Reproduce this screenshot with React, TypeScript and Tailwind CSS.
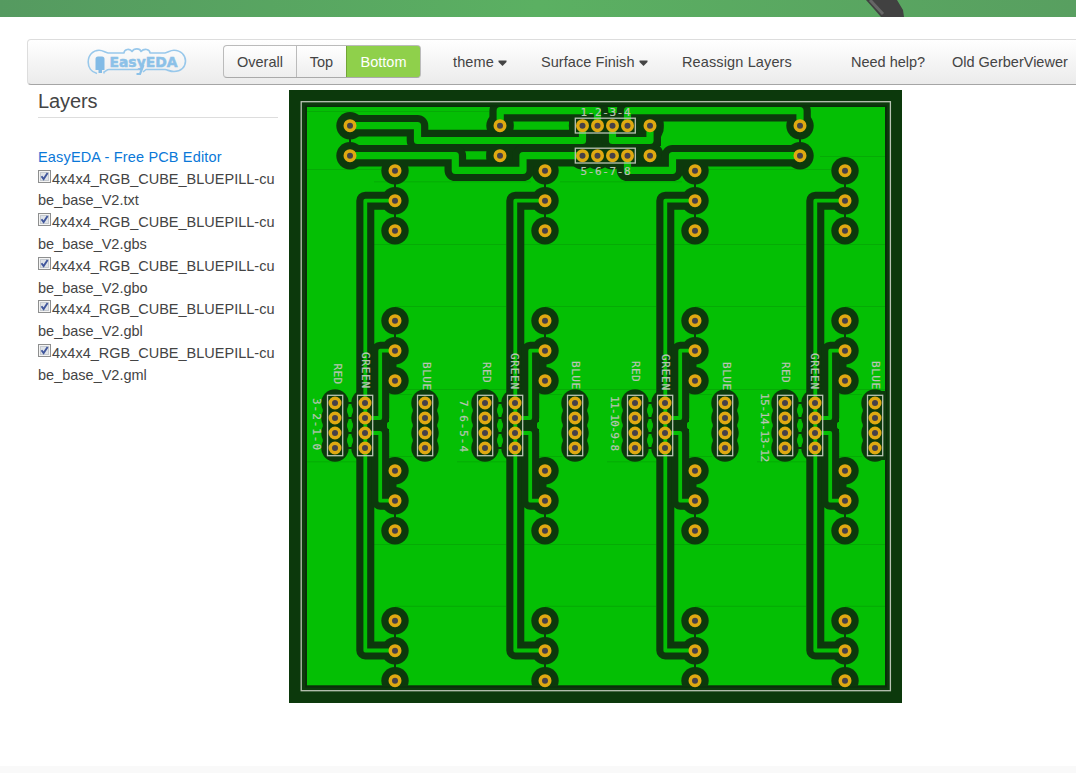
import React from 'react';

const DARK = '#0c390c';
const COPPER = '#04bf04';
const SILK = '#b9c4b4';

const columns = [0, 150, 300, 450];
const columnPads = [170.7, 200.7, 230.7, 320.7, 350.7, 380.7, 470.7, 500.7, 530.7, 620.7, 650.7, 680.7];
const headerX = [335, 365, 425];
const headerY = [403, 418, 433, 448];
const pinX = [582.5, 597.5, 612.5, 627.5];

const wideTraces = [
  'M350 125.7H417.5V140.5H582.5V125.7',
  'M350 155.7H455.3V170.3H523V155.7H582.5',
  'M500.2 125.7V110.7H597.5V125.7',
  'M627.5 125.7V110.7H800V125.7',
  'M612.5 125.7V140.5H650V125.7',
  'M627.5 155.7V170.3H672.5V155.7H800',
];

const thinTraces = [
  'M395 200.7H365.3V650.5H395',
  'M365 418H380.2V350.7H395',
  'M365 433H380.2V500.7H395',
];

const edgePads: [number, number][] = [350, 500, 650, 800].flatMap((x) => [
  [x, 125.7] as [number, number],
  [x, 155.7] as [number, number],
]);

const pads: [number, number][] = [
  ...edgePads,
  ...pinX.flatMap((x) => [[x, 125.7], [x, 155.7]] as [number, number][]),
  ...columns.flatMap((dx) => [
    ...columnPads.map((y) => [395 + dx, y] as [number, number]),
    ...headerX.flatMap((x) => headerY.map((y) => [x + dx, y] as [number, number])),
  ]),
];

const seams: [number, number, number][] = [
  [307, 489, 111.5], [307, 381, 169.5], [820, 885, 156.5], [705, 831, 169.5],
  [374, 531, 181.8], [560, 682, 181.8],
  ...columns.flatMap((dx) => [
    [374 + dx, Math.min(506 + dx, 885), 244.5],
    [395 + dx, Math.min(506 + dx, 885), 306.5],
    [389 + dx, Math.min(506 + dx, 885), 389.5],
    [389 + dx, 412 + dx, 394.5],
    [389 + dx, 412 + dx, 456.5],
    [307 + dx, 356 + dx, 461.8],
    [374 + dx, Math.min(506 + dx, 885), 544.5],
    [395 + dx, Math.min(506 + dx, 885), 606.3],
  ] as [number, number, number][]),
];

const verticalLabels: [string, number, number, number][] = [
  ['RED', 333.5, 363.5, 20.5], ['GREEN', 361.8, 352, 36], ['BLUE', 423, 362, 28], ['3-2-1-0', 313.3, 398, 52],
  ['RED', 483, 362, 20.5], ['GREEN', 511.3, 353, 36], ['BLUE', 571.8, 361, 28], ['7-6-5-4', 460, 400, 52],
  ['RED', 632.3, 361, 20.5], ['GREEN', 662.3, 354, 36], ['BLUE', 723, 362, 28], ['11-10-9-8', 610.5, 396, 55],
  ['RED', 782.3, 362, 20.5], ['GREEN', 811, 353, 36], ['BLUE', 872, 361, 28], ['15-14-13-12', 760.5, 393, 69],
];

const layers = ['txt', 'gbs', 'gbo', 'gbl', 'gml'];

function Board() {
  return (
    <svg className="block h-[613px] w-[613px] shrink-0" viewBox="289 90 613 613">
      <rect x="289" y="90" width="613" height="613" fill={DARK} />
      <rect x="305" y="105.5" width="582" height="582" fill="#0a2d0a" />
      <rect x="307" y="107" width="578" height="578.3" fill={COPPER} />
      <g stroke="#05ab05">
        {seams.map(([x1, x2, y], i) => (
          <path key={i} d={`M${x1} ${y}H${x2}`} />
        ))}
      </g>

      <clipPath id="pour">
        <rect x="306" y="106.5" width="580" height="580" />
      </clipPath>
      <g clipPath="url(#pour)">
        <g fill={DARK}>
          {pads.map(([x, y], i) => (
            <circle key={i} cx={x} cy={y} r="13.7" />
          ))}
          <path d="M569 114H663.5V131L661 137V146H655V166H569Z" />
          <rect x="486.4" y="142" width="27" height="19" />
          <rect x="490" y="115" width="23.3" height="22" />
          <rect x="877" y="391" width="9" height="69" />
          {columns.map((dx) => (
            <g key={dx} transform={`translate(${dx} 0)`}>
              {headerX.map((x) => (
                <rect key={x} x={x - 12.2} y="403" width="24.4" height="45" />
              ))}
              <rect x="372" y="350" width="24.5" height="31" />
              <rect x="372" y="471" width="24.5" height="30" />
              <rect x="372" y="380" width="17" height="42" />
              <rect x="372" y="429" width="17" height="42" />
              <rect x="372" y="420" width="15" height="11" />
            </g>
          ))}
        </g>
        <g fill="none" stroke={DARK} strokeLinejoin="round">
          <path strokeWidth="2" d="M350 126V156M800 126V156" />
          {columns.map((dx) => (
            <path
              key={dx}
              strokeWidth="2"
              d={`M${395 + dx} 170V231M${395 + dx} 320V381M${395 + dx} 470V531M${395 + dx} 620V681M${335 + dx} 403H${365 + dx}M${335 + dx} 418H${365 + dx}M${335 + dx} 433H${365 + dx}M${335 + dx} 448H${365 + dx}`}
            />
          ))}
          <g strokeWidth="21.6">
            {wideTraces.map((d) => (
              <path key={d} d={d} />
            ))}
          </g>
          <g strokeWidth="18">
            {columns.map((dx) => (
              <g key={dx} transform={`translate(${dx} 0)`}>
                {thinTraces.map((d) => (
                  <path key={d} d={d} />
                ))}
              </g>
            ))}
          </g>
        </g>
      </g>

      <g fill="none" stroke={COPPER} strokeLinejoin="round">
        <g strokeWidth="7.2">
          {wideTraces.map((d) => (
            <path key={d} d={d} />
          ))}
        </g>
        <g strokeWidth="3.8">
          {columns.map((dx) => (
            <g key={dx} transform={`translate(${dx} 0)`}>
              {thinTraces.map((d) => (
                <path key={d} d={d} />
              ))}
            </g>
          ))}
        </g>
      </g>
      <rect x="609" y="107" width="7.5" height="6" fill={COPPER} />

      <g fill={COPPER}>
        {columns.flatMap((dx) =>
          [410.5, 425.5, 440.5].map((y) => (
            <ellipse key={`${dx}-${y}`} cx={350 + dx} cy={y} rx="2.7" ry="5.8" />
          )),
        )}
      </g>

      <g fill="#464149" stroke="#dfa911" strokeWidth="3.5">
        {pads.map(([x, y], i) => (
          <circle key={i} cx={x} cy={y} r="4.75" />
        ))}
      </g>
      <g fill="none" stroke={SILK} strokeWidth="1.3">
        <rect x="301.2" y="101.7" width="589.2" height="589" />
        <rect x="575.3" y="118.2" width="60" height="14.8" />
        <rect x="575.3" y="148.2" width="60" height="14.8" />
        {columns.flatMap((dx) =>
          headerX.map((x) => (
            <rect key={`${dx}-${x}`} x={x + dx - 7.5} y="395.3" width="15.2" height="60.4" />
          )),
        )}
      </g>
      <g fill={SILK} stroke={SILK} strokeWidth="0.2" className="font-['DejaVu_Sans_Mono',monospace] text-[11px]">
        <text x="580.5" y="116" textLength="50">1-2-3-4</text>
        <text x="580.5" y="175" textLength="50">5-6-7-8</text>
        {verticalLabels.map(([label, x, y, len]) => (
          <text key={`${label}-${x}`} textLength={len} transform={`translate(${x} ${y}) rotate(90)`}>
            {label}
          </text>
        ))}
      </g>
    </svg>
  );
}

function Logo() {
  return (
    <svg className="block h-[28px] w-[100px] shrink-0" viewBox="0 0 100 28">
      <g fill="none" stroke="#98c8eb" strokeWidth="1.6" strokeLinejoin="round">
        <path d="M10 25.5C4 24 1.2 19 1.2 14C1.2 7 6 2.2 12 2.2C16 2.2 18 4.5 21 5H37C37 1 43 0 45 3.5C47 0 53 0 54 3.5C57 0 63 1 63 5H78C81 4.5 83 2.2 87 2.2C94 2.2 98.5 7.5 98.5 13C98.5 19 94 23.5 87 23.5C83 23.5 81 22 78 21.5H59L56 24" />
        <path d="M17 25.5V24C19 23 20 21.5 22 21.5H51" />
      </g>
      <path d="M8.5 22V11Q8.5 8.5 11 8.5H15Q17.5 8.5 17.5 11V22H15V25H11.5V22Z" fill="#82bbe6" />
      <text
        x="22.5"
        y="19"
        textLength="68"
        lengthAdjust="spacingAndGlyphs"
        fill="#8cc1e8"
        stroke="#8cc1e8"
        strokeWidth="0.5"
        className="font-['DejaVu_Sans',sans-serif] text-[14px] font-bold"
      >
        EasyEDA
      </text>
      <path d="M56.5 17L53 26H49.5" fill="none" stroke="#8cc1e8" strokeWidth="2.2" />
    </svg>
  );
}

function Caret() {
  return (
    <svg className="ml-[4px] block h-[6px] w-[9px]" viewBox="0 0 9 6">
      <path d="M0.5 0.5H8.5V2L4.5 6L0.5 2Z" fill="#444" />
    </svg>
  );
}

function Checkbox() {
  return (
    <svg className="mr-[1px] inline-block h-[13px] w-[13px] align-[1px]" viewBox="0 0 13 13">
      <rect x="0.5" y="0.5" width="12" height="12" fill="#f4f4f4" stroke="#8e8f8f" />
      <rect x="2.5" y="2.5" width="8" height="8" fill="#dfe3e8" stroke="#c4c9cf" />
      <path d="M3.5 6.2L5.6 9L9.6 3" fill="none" stroke="#40569c" strokeWidth="1.9" />
    </svg>
  );
}

export default function App() {
  return (
    <div className="flex h-[773px] w-[1076px] flex-col overflow-hidden bg-white font-['Liberation_Sans',Arial,sans-serif] text-[14.5px] text-[#444]">
      <div className="flex h-[17px] shrink-0 bg-linear-to-r from-[#559a60] via-[#5bb062] to-[#589f60] pl-[866px]">
        <svg className="block h-[17px] w-[40px]" viewBox="0 0 40 17">
          <path d="M0 0H31L37 10L38 17H15L8 9Z" fill="#414141" />
          <path d="M4 0L17 14" stroke="#666" strokeWidth="3" />
        </svg>
      </div>

      <nav className="mt-[22px] ml-[27px] flex h-[46px] w-[1080px] shrink-0 items-center rounded-[4px] border border-[#ddd] border-b-[#a5a5a5] bg-linear-to-b from-white to-[#ebebeb] pl-[59px]">
        <Logo />
        <div className="mb-[1px] ml-[36px] flex h-[33px] overflow-hidden rounded-[4px] border border-[#bbb] border-b-[#aaa] bg-linear-to-b from-white to-[#eee]">
          <button className="w-[73px] border-r border-[#bbb] pt-[2px]">Overall</button>
          <button className="w-[49px] pt-[2px]">Top</button>
          <button className="-my-px -mr-px w-[75px] rounded-r-[4px] border border-[#72a536] bg-[#8fd04b] pt-[2px] text-white">Bottom</button>
        </div>
        <div className="ml-[32px] flex w-[88px] items-center pt-[2px] tracking-[0.1px]">theme<Caret /></div>
        <div className="flex w-[141px] items-center pt-[2px] tracking-[0.06px]">Surface Finish<Caret /></div>
        <div className="w-[169px] pt-[2px] tracking-[0.13px] whitespace-nowrap">Reassign Layers</div>
        <div className="w-[101px] pt-[2px] whitespace-nowrap">Need help?</div>
        <div className="pt-[2px] whitespace-nowrap">Old GerberViewer</div>
      </nav>

      <main className="flex pt-[5px] pl-[38px]">
        <aside className="w-[251px] shrink-0">
          <h2 className="mb-[28px] h-[28px] w-[240px] border-b border-[#ddd] text-[20px] leading-[22px] tracking-[-0.1px]">Layers</h2>
          <a className="block h-[22.7px] leading-[22px] tracking-[0.16px] text-[#0a78d8]">EasyEDA - Free PCB Editor</a>
          {layers.map((ext) => (
            <div key={ext} className="h-[43.6px] leading-[21.8px] whitespace-nowrap">
              <Checkbox />4x4x4_RGB_CUBE_BLUEPILL-cu
              <br />
              be_base_V2.{ext}
            </div>
          ))}
        </aside>
        <Board />
      </main>
      <footer className="mt-auto h-[7px] shrink-0 bg-[#f9f9f9]" />
    </div>
  );
}
